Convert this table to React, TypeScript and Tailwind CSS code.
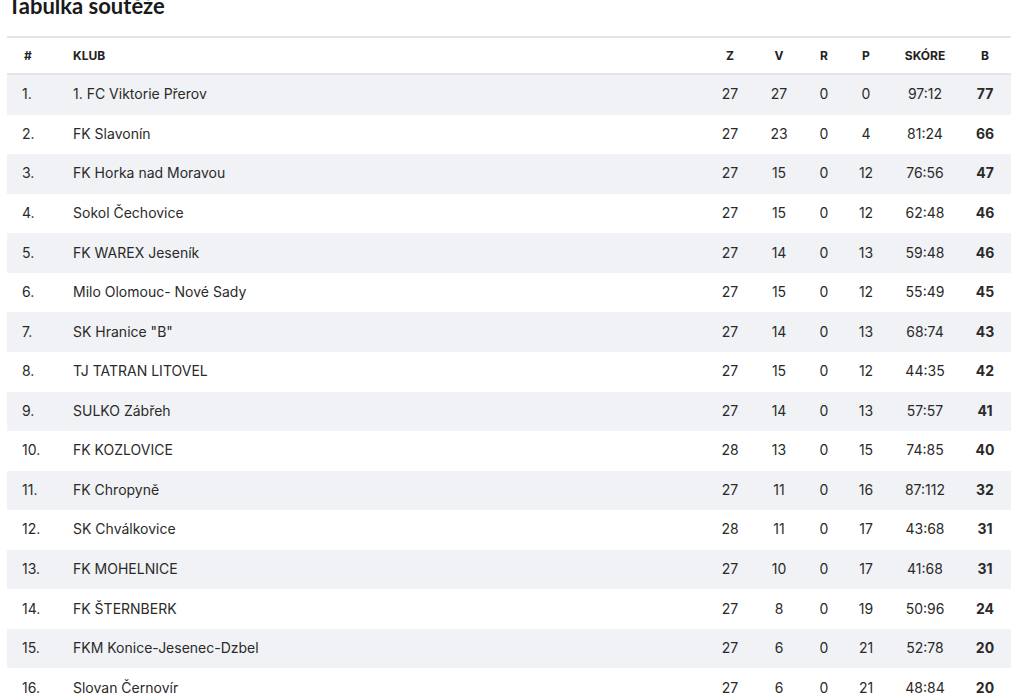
import React from "react";

const rows: [string, string, number, number, number, number, string, number][] = [
  ["1.", "1. FC Viktorie Přerov", 27, 27, 0, 0, "97:12", 77],
  ["2.", "FK Slavonín", 27, 23, 0, 4, "81:24", 66],
  ["3.", "FK Horka nad Moravou", 27, 15, 0, 12, "76:56", 47],
  ["4.", "Sokol Čechovice", 27, 15, 0, 12, "62:48", 46],
  ["5.", "FK WAREX Jeseník", 27, 14, 0, 13, "59:48", 46],
  ["6.", "Milo Olomouc- Nové Sady", 27, 15, 0, 12, "55:49", 45],
  ["7.", "SK Hranice \"B\"", 27, 14, 0, 13, "68:74", 43],
  ["8.", "TJ TATRAN LITOVEL", 27, 15, 0, 12, "44:35", 42],
  ["9.", "SULKO Zábřeh", 27, 14, 0, 13, "57:57", 41],
  ["10.", "FK KOZLOVICE", 28, 13, 0, 15, "74:85", 40],
  ["11.", "FK Chropyně", 27, 11, 0, 16, "87:112", 32],
  ["12.", "SK Chválkovice", 28, 11, 0, 17, "43:68", 31],
  ["13.", "FK MOHELNICE", 27, 10, 0, 17, "41:68", 31],
  ["14.", "FK ŠTERNBERK", 27, 8, 0, 19, "50:96", 24],
  ["15.", "FKM Konice-Jesenec-Dzbel", 27, 6, 0, 21, "52:78", 20],
  ["16.", "Slovan Černovír", 27, 6, 0, 21, "48:84", 20],
];

export default function App() {
  return (
    <div
      className="w-[1024px] h-[700px] overflow-hidden bg-white text-[#2a2a2a]"
      style={{ fontFamily: "Inter, 'Noto Sans', sans-serif" }}
    >
      <div className="px-[7px]">
        <h2
          className="-mt-[8px] h-[44px] text-[22px] leading-[28px] font-bold text-[#1a1a1a] pl-[1px]"
          style={{ fontFamily: "Lato, 'Noto Sans', sans-serif" }}
        >
          Tabulka soutěže
        </h2>
        <div className="w-[1004px] border-t-2 border-[#e4e5e9]">
          <div className="flex items-center h-[37px] border-b-2 border-[#e4e5e9] text-[12px] font-bold text-[#222]">
            <div className="w-[66px] pl-[17px]">#</div>
            <div className="flex-1">KLUB</div>
            <div className="w-[42px] text-center">Z</div>
            <div className="w-[56px] text-center">V</div>
            <div className="w-[34px] text-center">R</div>
            <div className="w-[50px] text-center">P</div>
            <div className="w-[68px] text-center">SKÓRE</div>
            <div className="w-[52px] text-center">B</div>
          </div>
          {rows.map((r, i) => (
            <div
              key={i}
              className={`flex items-center h-[39.57px] pb-[2px] text-[14px] ${i % 2 === 0 ? "bg-[#f1f2f5]" : "bg-white"}`}
            >
              <div className="w-[66px] pl-[15px]">{r[0]}</div>
              <div className="flex-1">{r[1]}</div>
              <div className="w-[42px] text-center">{r[2]}</div>
              <div className="w-[56px] text-center">{r[3]}</div>
              <div className="w-[34px] text-center">{r[4]}</div>
              <div className="w-[50px] text-center">{r[5]}</div>
              <div className="w-[68px] text-center">{r[6]}</div>
              <div className="w-[52px] text-center font-bold">{r[7]}</div>
            </div>
          ))}
        </div>
      </div>
    </div>
  );
}
